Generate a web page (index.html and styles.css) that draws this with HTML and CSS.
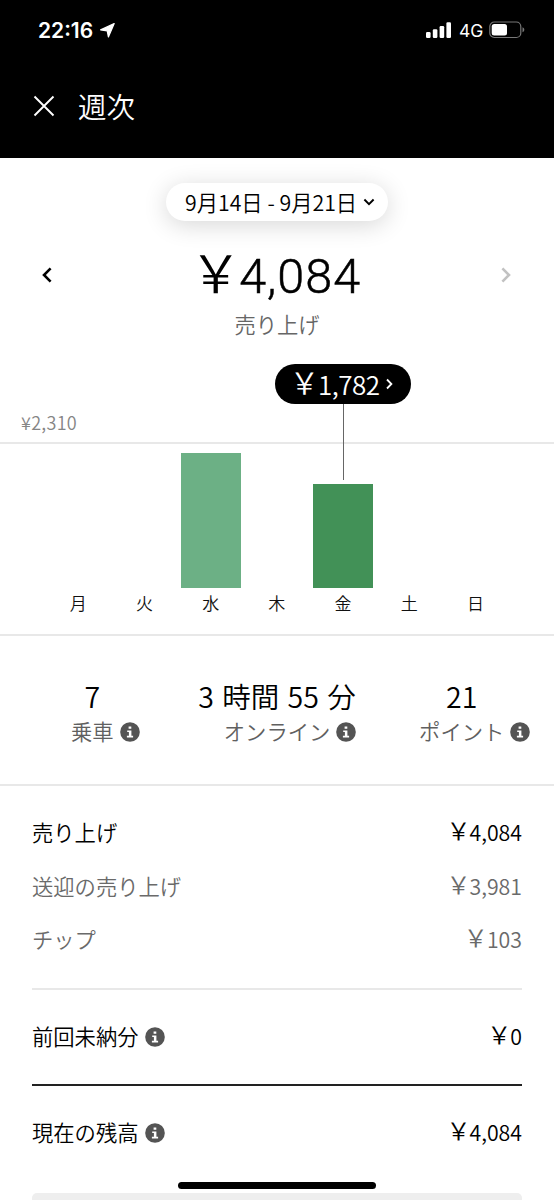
FILE: index.html
```
<!DOCTYPE html>
<html lang="ja">
<head>
<meta charset="utf-8">
<title>週次</title>
<link rel="stylesheet" href="styles.css">
</head>
<body>
<svg class="defs" width="0" height="0" aria-hidden="true">
  <symbol id="info" viewBox="0 0 20 20">
    <circle cx="10" cy="10" r="9.8" fill="#545454"/>
    <path d="M8.6 4.4h2.7v2.4H8.6zM7.2 8.4h4.2v5.4h1.7v1.8H6.9v-1.8h2V10.100H7.200z" fill="#fff"/>
  </symbol>
</svg>
<div class="screen">
  <header class="header">
    <div class="status">
      <span class="clock">22:16</span>
      <svg class="location" width="15" height="15" viewBox="0 0 15 15"><path d="M14.200.6 8.400 14 7.200 7.800.6 6.900z" fill="#fff" stroke="#fff" stroke-width="1.200" stroke-linejoin="round"/></svg>
      <svg class="signal" width="26" height="17" viewBox="0 0 26 17" fill="#fff"><rect x="0" y="10" width="4.600" height="6" rx="1.200"/><rect x="6.800" y="7.300" width="4.600" height="8.700" rx="1.200"/><rect x="13.600" y="4" width="4.600" height="12" rx="1.200"/><rect x="20.400" y="0.300" width="4.600" height="15.700" rx="1.200"/></svg>
      <span class="network">4G</span>
      <svg class="battery" width="36" height="18" viewBox="0 0 36 18"><rect x=".8" y="1" width="31" height="15.500" rx="4.500" fill="none" stroke="#777" stroke-width="1.200"/><rect x="2.700" y="3" width="15.300" height="11.500" rx="2.500" fill="#fff"/><path d="M33.500 6.300c2.400.8 2.400 4.200 0 5z" fill="#777"/></svg>
    </div>
    <div class="titlebar">
      <svg width="22" height="22" viewBox="0 0 22 22"><path d="M1.500 1.500l19 19M20.500 1.500l-19 19" stroke="#fff" stroke-width="1.900"/></svg>
      <h1 class="title">週次</h1>
    </div>
  </header>

  <section class="summary">
    <div class="range">
      <span class="range-text">9月14日 - 9月21日</span>
      <svg width="12" height="8" viewBox="0 0 12 8"><path d="M1.400 1.500 6 6.100l4.600-4.600" fill="none" stroke="#000" stroke-width="1.900"/></svg>
    </div>
    <div class="amount-row">
      <svg width="10" height="16" viewBox="0 0 10 16"><path d="M8.600 1.300 2 8l6.600 6.700" fill="none" stroke="#000" stroke-width="2.600"/></svg>
      <span class="amount"><span class="yen">￥</span><span class="figures">4,084</span></span>
      <svg width="10" height="16" viewBox="0 0 10 16"><path d="M1.400 1.300 8 8l-6.600 6.700" fill="none" stroke="#c2c2c2" stroke-width="2.600"/></svg>
    </div>
    <div class="caption">売り上げ</div>
  </section>

  <section class="chart">
    <div class="axis">¥2,310</div>
    <div class="plot">
      <div class="day"><div class="label">月</div></div>
      <div class="day"><div class="label">火</div></div>
      <div class="day"><div class="bar" style="height:134.500px"></div><div class="label">水</div></div>
      <div class="day"><div class="label">木</div></div>
      <div class="day">
        <div class="bar selected" style="height:104px">
          <div class="callout">
            <div class="bubble"><span class="bubble-text"><span class="yen">￥</span>1,782</span><svg width="7" height="12" viewBox="0 0 7 12"><path d="M1 1.500 5.400 6 1 10.500" fill="none" stroke="#fff" stroke-width="1.800"/></svg></div>
            <div class="stem"></div>
          </div>
        </div>
        <div class="label">金</div>
      </div>
      <div class="day"><div class="label">土</div></div>
      <div class="day"><div class="label">日</div></div>
    </div>
  </section>

  <section class="stats">
    <div class="stat"><div class="value">7</div><div class="name">乗車<svg class="info"><use href="#info"/></svg></div></div>
    <div class="stat"><div class="value">3 時間 55 分</div><div class="name">オンライン<svg class="info"><use href="#info"/></svg></div></div>
    <div class="stat"><div class="value">21</div><div class="name">ポイント<svg class="info"><use href="#info"/></svg></div></div>
  </section>

  <section class="breakdown">
    <div class="group first">
      <div class="row"><span>売り上げ</span><span><span class="yen">￥</span>4,084</span></div>
      <div class="row muted"><span>送迎の売り上げ</span><span><span class="yen">￥</span>3,981</span></div>
      <div class="row muted"><span>チップ</span><span><span class="yen">￥</span>103</span></div>
    </div>
    <div class="group previous">
      <div class="row"><span class="with-info">前回未納分<svg class="info"><use href="#info"/></svg></span><span><span class="yen">￥</span>0</span></div>
    </div>
    <div class="group balance">
      <div class="row"><span class="with-info">現在の残高<svg class="info"><use href="#info"/></svg></span><span><span class="yen">￥</span>4,084</span></div>
    </div>
    <div class="button"></div>
  </section>
  <div class="home"></div>
</div>
</body>
</html>
```
FILE: styles.css
```
* { box-sizing: border-box; }
body { margin: 0; background: #fff; }
svg { display: block; flex: none; }
.defs { position: absolute; }

.screen {
  position: relative;
  width: 554px;
  height: 1200px;
  overflow: hidden;
  background: #fff;
  color: #000;
  font-family: "Noto Sans CJK JP", sans-serif;
  font-weight: 350;
  font-size: 21.3px;
  white-space: nowrap;
}
.yen { display: inline-block; font-size: 1.13em; line-height: 1; letter-spacing: 0; margin: 0 -.04em 0 -.1em; transform: translateY(-.03em); }

/* Header */
.header { height: 158px; background: #000; color: #fff; padding-top: 15px; }
.status { display: flex; align-items: center; height: 30px; padding: 0 29px 0 38px; font-family: Inter, sans-serif; }
.clock { font-size: 21px; font-weight: 600; width: 56px; }
.location { margin-left: 6px; }
.signal { margin-left: auto; }
.network { font-size: 17.500px; font-weight: 400; margin-left: 7px; width: 24px; }
.battery { margin-left: 6px; }
.titlebar { display: flex; align-items: center; height: 40px; margin-top: 41px; padding-left: 33px; gap: 23px; }
.title { margin: 0; font-size: 28.5px; font-weight: 350; line-height: 38px; }

/* Period and total */
.summary { height: 184px; padding-top: 25px; text-align: center; }
.range {
  display: flex; align-items: center; gap: 6px;
  width: 222px; height: 38px; margin: 0 auto; padding-left: 19px;
  border-radius: 19px; background: #fff;
  box-shadow: 0 4px 24px rgba(0, 0, 0, .16);
}
.range-text { width: 172px; line-height: 34px; text-align: left; }
.amount-row { display: flex; align-items: center; justify-content: space-between; height: 60px; margin-top: 24px; padding: 0 43px 0 42px; }
.amount { font-size: 46px; line-height: 54px; margin: -2px 0 0 3px; }
.amount .yen { margin-right: -.05em; transform: none; }
.figures { font-family: Roboto, sans-serif; font-weight: 300; font-size: 48.500px; letter-spacing: 1px; -webkit-text-stroke: .5px #000; }
.caption { line-height: 32px; margin-top: 3px; color: #666; }

/* Chart */
.chart { height: 294px; padding-top: 66px; border-bottom: 2px solid #e8e8e8; }
.axis { height: 36px; padding-left: 21px; font-size: 18px; line-height: 28px; letter-spacing: .3px; color: #858585; border-bottom: 2px solid #e8e8e8; }
.plot { display: grid; grid-template-columns: repeat(7, 66.200px); height: 190px; padding: 0 45.200px; }
.day { display: flex; flex-direction: column; align-items: center; justify-content: flex-end; }
.bar { position: relative; width: 60px; background: #6cb085; flex: none; }
.bar.selected { background: #429157; }
.label { height: 46.500px; font-size: 17px; line-height: 29px; color: #111; flex: none; }
.callout { position: absolute; bottom: calc(100% + 4px); left: 50%; transform: translateX(-50%); display: flex; flex-direction: column; align-items: center; }
.bubble { display: flex; align-items: center; justify-content: center; gap: 7px; width: 136px; height: 40px; border-radius: 20px; background: #000; color: #fff; }
.bubble-text { font-size: 26px; line-height: 36px; letter-spacing: -.5px; }
.stem { width: 1px; height: 76px; background: #666; }

/* Stats */
.stats { display: grid; grid-template-columns: repeat(3, 184.700px); height: 150px; padding-top: 42px; border-bottom: 2px solid #e8e8e8; }
.stat { display: flex; flex-direction: column; align-items: center; }
.value { font-size: 28.5px; line-height: 36px; word-spacing: 2px; }
.name { display: flex; align-items: center; margin-right: -26px; line-height: 34px; color: #606060; }
.info { width: 20px; height: 20px; margin-left: 6px; position: relative; top: 1px; }

/* Breakdown */
.breakdown { padding: 0 32px; }
.group { border-bottom: 2px solid #e8e8e8; }
.row { display: flex; justify-content: space-between; line-height: 53.500px; }
.muted { color: #6a6a6a; }
.with-info { display: flex; align-items: center; }
.first { height: 204px; padding-top: 19px; }
.previous { height: 96px; padding-top: 19px; border-color: #222; }
.balance { height: 107px; padding-top: 19px; border: 0; }
.button { height: 20px; border-radius: 5px; background: #eee; }
.home { position: absolute; left: 178px; top: 1182px; width: 198px; height: 7px; border-radius: 4px; background: #000; }
```
